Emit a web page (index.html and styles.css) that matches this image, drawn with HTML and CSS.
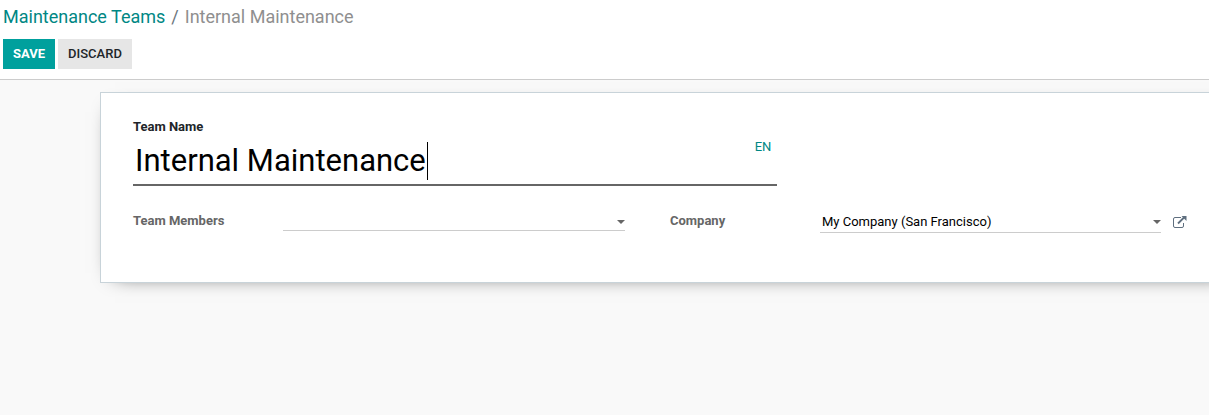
FILE: index.html
```html
<!DOCTYPE html>
<html lang="en">
<head>
    <meta charset="UTF-8">
    <meta name="viewport" content="width=device-width, initial-scale=1.0">
    <title>Internal Maintenance - Maintenance Teams</title>
    <link rel="stylesheet" href="styles.css">
</head>
<body>

<!-- Breadcrumb and form buttons -->
<header class="control-panel">
    <nav class="breadcrumb">
        <a href="#">Maintenance Teams</a>
        <span class="separator">/</span>
        <span class="current">Internal Maintenance</span>
    </nav>
    <div class="buttons">
        <button type="submit" form="teamForm" class="btn btn-primary">Save</button>
        <button type="button" class="btn btn-secondary">Discard</button>
    </div>
</header>

<main class="content">
    <form id="teamForm" class="sheet">
        <div class="title">
            <label for="teamName">Team Name</label>
            <div class="title-field">
                <input type="text" id="teamName" name="name" value="Internal Maintenance">
                <span class="caret"></span>
                <button type="button" class="translate">EN</button>
            </div>
        </div>

        <div class="group">
            <div class="field">
                <label for="members">Team Members</label>
                <div class="select">
                    <select id="members" name="members">
                        <option value=""></option>
                    </select>
                </div>
            </div>
            <div class="field field-company">
                <label for="company">Company</label>
                <div class="select">
                    <select id="company" name="company">
                        <option value="1">My Company (San Francisco)</option>
                    </select>
                </div>
                <button type="button" class="external" aria-label="External link">
                    <svg width="14" height="14" viewBox="0 0 14 14" fill="none" stroke="currentColor">
                        <path d="M8 2.5H2A1.5 1.5 0 0 0 .5 4v7A1.5 1.5 0 0 0 2 12.5h7a1.5 1.5 0 0 0 1.5-1.5V8" stroke-width="1"/>
                        <path d="M5 8.5 11 2.5" stroke-width="1.8"/>
                        <path d="M8.5 1H13.5V6Z" fill="currentColor" stroke="none"/>
                    </svg>
                </button>
            </div>
        </div>
    </form>
</main>

</body>
</html>
```

FILE: styles.css
```css
* {
    box-sizing: border-box;
}
body {
    margin: 0;
    min-height: 100vh;
    display: flex;
    flex-direction: column;
    font-family: Roboto, "Liberation Sans", sans-serif;
    font-size: 13px;
    line-height: 20px;
    color: #212529;
    background-color: #f9f9f9;
}
button,
input,
select {
    font-family: inherit;
    font-size: inherit;
    line-height: inherit;
}
button {
    border: none;
    cursor: pointer;
}

/* Control panel */
.control-panel {
    padding: 3px 3px 10px;
    background-color: #fff;
    border-bottom: 1px solid #ccc;
}
.breadcrumb {
    display: flex;
    gap: 6px;
    margin-bottom: 8px;
    font-size: 18px;
    line-height: 28px;
}
.breadcrumb a {
    color: #008784;
    text-decoration: none;
}
.separator {
    color: #6c757d;
}
.current {
    color: #8f8f8f;
}
.buttons {
    display: flex;
    gap: 3px;
}
.btn {
    height: 30px;
    padding: 0 10px;
    font-weight: 500;
    text-transform: uppercase;
}
.btn-primary {
    background-color: #00a09d;
    color: #fff;
    font-weight: 700;
}
.btn-secondary {
    background-color: #e6e6e6;
    color: #212529;
}

/* Form sheet, runs past the right edge of the window */
.content {
    flex: 1;
    overflow: hidden;
    padding: 12px 0 24px 100px;
}
.sheet {
    margin-right: -31px;
    padding: 24px 32px 49px;
    background-color: #fff;
    border: 1px solid #c8d3d9;
    box-shadow: 0 5px 20px -15px #000;
}
label {
    font-weight: 700;
    color: #666;
}
.title {
    width: 60%;
    margin-bottom: 25px;
}
.title label {
    display: block;
    color: #212529;
}
.title-field {
    display: flex;
    align-items: center;
    height: 49px;
    border-bottom: 2px solid #666;
}
.title-field input {
    field-sizing: content;
    padding: 0 1px 0 2px;
    border: none;
    outline: none;
    background: none;
    font-size: 31px;
    line-height: 40px;
    color: #000;
}
.caret {
    width: 1px;
    height: 38px;
    background-color: #000;
}
.translate {
    align-self: flex-start;
    margin-left: auto;
    padding: 0 6px;
    background: none;
    color: #008784;
}

/* Two column group */
.group {
    display: grid;
    grid-template-columns: 1fr 1fr;
}
.field {
    display: flex;
    align-items: flex-start;
    padding-right: 45px;
}
.field label {
    flex: 0 0 150px;
}
.field-company {
    padding-right: 20px;
}
.select {
    position: relative;
    flex: 1;
}
.select::after {
    content: "";
    position: absolute;
    top: 9px;
    right: 0;
    border: 4px solid transparent;
    border-top-color: #666;
    border-bottom: none;
    pointer-events: none;
}
.select select {
    display: block;
    width: 100%;
    height: 20px;
    padding: 0 16px 0 2px;
    appearance: none;
    border: none;
    border-bottom: 1px solid #ccc;
    border-radius: 0;
    background: none;
    color: #000;
}
.field-company select {
    height: 22px;
}
.external {
    display: flex;
    margin-left: 12px;
    padding: 4px 0;
    background: none;
    color: #5f6f7f;
}
```
